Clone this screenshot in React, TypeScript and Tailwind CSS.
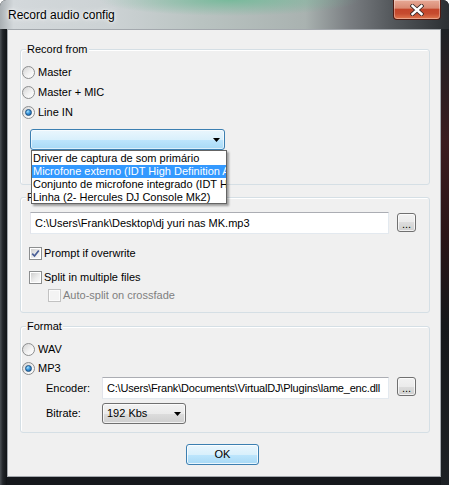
import type { ReactNode } from 'react'

const body = "font-['Liberation_Sans',Arial,sans-serif] text-[11px] leading-[13px] text-black"

function Radio({ label, checked }: { label: string; checked?: boolean }) {
  return (
    <div className="flex items-center h-[16px]">
      <span className="w-[13px] h-[13px] rounded-full border border-[#8c8e8f] bg-[linear-gradient(135deg,#d4d4d4_0%,#f4f4f4_60%,#ffffff_100%)] flex items-center justify-center shrink-0">
        {checked && (
          <span className="w-[7px] h-[7px] rounded-full border border-[#1b4f80] bg-[radial-gradient(circle_at_35%_30%,#a6e4ff_0%,#3a95dc_45%,#11528f_100%)]" />
        )}
      </span>
      <span className="ml-[3px]">{label}</span>
    </div>
  )
}

function Checkbox({ label, checked, disabled }: { label: string; checked?: boolean; disabled?: boolean }) {
  return (
    <div className="flex items-center h-[16px]">
      <span className={`w-[13px] h-[13px] border p-[1px] shrink-0 ${disabled ? 'border-[#c2c2c2] bg-[#fbfbfb]' : 'border-[#8c8e8f] bg-white'}`}>
        <span className={`block w-full h-full ${disabled ? 'bg-[#f3f3f3]' : 'bg-[linear-gradient(135deg,#cfcfcf_0%,#ececec_55%,#fafafa_100%)]'}`}>
          {checked && (
            <svg width="9" height="9" viewBox="0 0 9 9">
              <path d="M1.2 4.6 L3.5 7 L7.8 1.4" fill="none" stroke="#4a5f97" strokeWidth="1.7" />
            </svg>
          )}
        </span>
      </span>
      <span className={`ml-[2px] ${disabled ? 'text-[#7f7f7f]' : ''}`}>{label}</span>
    </div>
  )
}

function Arrow() {
  return (
    <svg width="7" height="4" viewBox="0 0 7 4">
      <path d="M0 0h7L3.5 4z" fill="#000" />
    </svg>
  )
}

function Group({ label, className, children }: { label: string; className: string; children: ReactNode }) {
  return (
    <div className={`relative w-[410px] ml-[12px] border border-[#d5dfe5] rounded-[3px] shadow-[inset_1px_1px_0_#fff] ${className}`}>
      <span className="absolute top-[-7px] left-[5px] px-[1px] bg-[#f0f0f0]">{label}</span>
      {children}
    </div>
  )
}

function TextBox({ value, className }: { value: string; className: string }) {
  return (
    <div className={`h-[22px] bg-white border border-[#e3e9ef] border-t-[#abadb3] border-l-[#e2e3ea] flex items-center whitespace-nowrap overflow-hidden ${className}`}>
      {value}
    </div>
  )
}

function BrowseButton() {
  return (
    <div className="w-[19px] h-[19px] ml-[8px] rounded-[3px] border border-[#707070] bg-[linear-gradient(to_bottom,#f2f2f2_0%,#ebebeb_50%,#dddddd_50%,#cfcfcf_100%)] shadow-[inset_0_0_0_1px_rgba(255,255,255,0.7)] flex items-end justify-center pb-[3px] leading-[8px]">
      ...
    </div>
  )
}

export default function App() {
  return (
    <div className={`w-[449px] h-[485px] overflow-hidden rounded-t-[6px] bg-[#15181c] ${body}`}>
      {/* title bar */}
      <div className="h-[29px] flex items-start bg-[radial-gradient(ellipse_130px_16px_at_230px_0px,rgba(110,185,150,0.85),transparent),linear-gradient(to_right,#a9afb3_0%,#d3d8db_3%,#ccd2d4_25%,#b9c3c1_45%,#a9b2b0_68%,#797d81_78%,#55595d_87%,#2b2f33_100%)]">
        <span className="ml-[8px] mt-[8px] text-[12px] leading-[14px] [text-shadow:0_0_7px_#fff,0_0_3px_#fff]">Record audio config</span>
        <div className="ml-auto mr-[8px] w-[48px] h-[20px] rounded-b-[4px] border border-t-0 border-[#4f1a12] bg-[linear-gradient(to_bottom,#e7a996_0%,#d98a73_42%,#c4452a_50%,#c64b2f_72%,#e0784f_100%)] shadow-[inset_0_0_0_1px_rgba(255,255,255,0.35)] flex items-center justify-center">
          <svg width="14" height="12" viewBox="0 0 14 12">
            <path d="M2.5 2 L11.5 10 M11.5 2 L2.5 10" stroke="#3a2a28" strokeWidth="4.2" strokeLinecap="square" />
            <path d="M2.5 2 L11.5 10 M11.5 2 L2.5 10" stroke="#fff" strokeWidth="2.4" strokeLinecap="square" />
          </svg>
        </div>
      </div>

      <div className="flex h-[456px]">
        <div className="w-[7px] bg-[linear-gradient(to_right,#4b5055_0%,#22262a_40%,#101316_100%)]" />
        {/* client area */}
        <div className="w-[434px] h-[448px] border border-[#a3a8ad] bg-[#f0f0f0] flex flex-col">
          <Group label="Record from" className="mt-[19px] h-[136px] pt-[12px] pl-[1px]">
            <div className="flex flex-col gap-[4px] pt-[2px]">
              <Radio label="Master" />
              <Radio label="Master + MIC" />
              <Radio label="Line IN" checked />
            </div>
            <div className="relative ml-[8px] mt-[9px] w-[195px] h-[21px] rounded-[3px] border border-[#3c7fb1] bg-[linear-gradient(to_bottom,#eaf6fd_0%,#d9f0fc_50%,#bee6fd_50%,#a7d9f5_100%)] shadow-[inset_0_0_0_1px_rgba(255,255,255,0.6)] flex items-center justify-end pr-[4px]">
              <Arrow />
              <div className="absolute z-10 left-0 top-[20px] w-[196px] h-[54px] bg-white border border-[#646464] shadow-[2px_2px_2px_rgba(0,0,0,0.35)] flex flex-col py-[1px] overflow-hidden whitespace-nowrap">
                <div className="h-[13px] pl-[1px]">Driver de captura de som primário</div>
                <div className="h-[13px] pl-[1px] bg-[#3399ff] text-white">Microfone externo (IDT High Definition Audio CODEC)</div>
                <div className="h-[13px] pl-[1px]">Conjunto de microfone integrado (IDT High Definition Audio CODEC)</div>
                <div className="h-[13px] pl-[1px]">Linha (2- Hercules DJ Console Mk2)</div>
              </div>
            </div>
          </Group>

          <Group label="File" className="mt-[12px] h-[116px] pt-[14px] pl-[1px]">
            <div className="flex items-start ml-[8px]">
              <TextBox value="C:\Users\Frank\Desktop\dj yuri nas MK.mp3" className="w-[359px] pl-[4px]" />
              <div className="mt-[1px]"><BrowseButton /></div>
            </div>
            <div className="ml-[7px] mt-[11px]">
              <Checkbox label="Prompt if overwrite" checked />
            </div>
            <div className="ml-[7px] mt-[8px]">
              <Checkbox label="Split in multiple files" />
            </div>
            <div className="ml-[26px] mt-[2px]">
              <Checkbox label="Auto-split on crossfade" disabled />
            </div>
          </Group>

          <Group label="Format" className="mt-[13px] h-[107px] pt-[14px] pl-[1px]">
            <Radio label="WAV" />
            <div className="mt-[3px]">
              <Radio label="MP3" checked />
            </div>
            <div className="flex items-center mt-[1px]">
              <span className="ml-[24px] w-[56px]">Encoder:</span>
              <TextBox value="C:\Users\Frank\Documents\VirtualDJ\Plugins\lame_enc.dll" className="w-[287px] h-[21px] pl-[4px] tracking-[-0.2px]" />
              <div className="self-start"><BrowseButton /></div>
            </div>
            <div className="flex items-center mt-[4px]">
              <span className="ml-[24px] w-[56px]">Bitrate:</span>
              <div className="w-[84px] h-[21px] rounded-[3px] border border-[#707070] bg-[linear-gradient(to_bottom,#f2f2f2_0%,#ebebeb_50%,#dddddd_50%,#cfcfcf_100%)] shadow-[inset_0_0_0_1px_rgba(255,255,255,0.7)] flex items-center pl-[4px] pr-[4px]">
                <span>192 Kbs</span>
                <span className="ml-auto flex"><Arrow /></span>
              </div>
            </div>
          </Group>

          <div className="ml-[178px] mt-[11px] w-[73px] h-[21px] rounded-[3px] border border-[#3c7fb1] bg-[linear-gradient(to_bottom,#eaf6fd_0%,#d9f0fc_50%,#bee6fd_50%,#a7d9f5_100%)] shadow-[inset_0_0_0_1px_rgba(255,255,255,0.75)] flex items-center justify-center">
            OK
          </div>
        </div>
        <div className="w-[8px] bg-[linear-gradient(to_bottom,#1d2125_0%,#3b1c1f_25%,#2a1517_45%,#15181b_65%,#1d2125_100%)]" />
      </div>
    </div>
  )
}
